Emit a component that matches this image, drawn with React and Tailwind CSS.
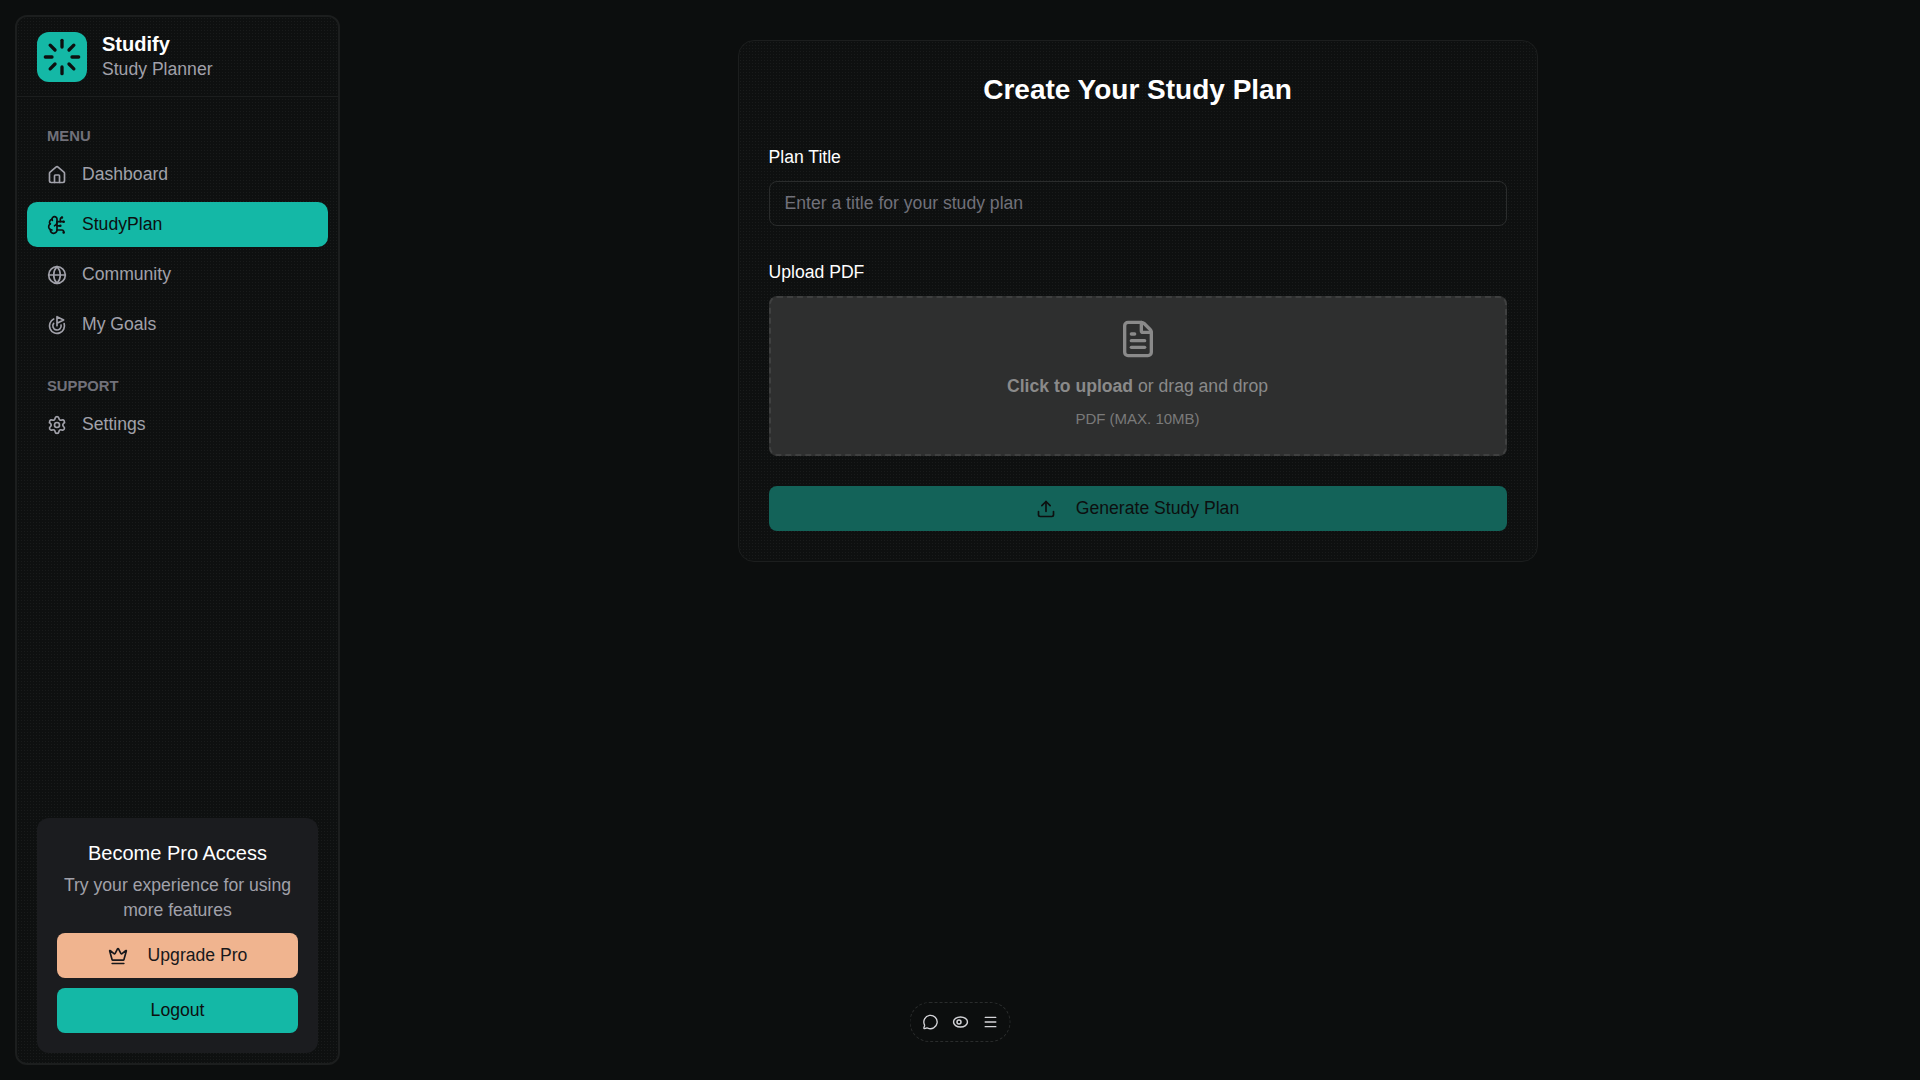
import React from 'react';
import { House, BrainCircuit, Globe, Goal, Settings, Crown, FileText, Upload, MessageCircle, Menu, Loader } from 'lucide-react';

const menuItems = [
  { label: 'Dashboard', icon: House },
  { label: 'StudyPlan', icon: BrainCircuit, active: true },
  { label: 'Community', icon: Globe },
  { label: 'My Goals', icon: Goal },
];

function NavItem({ label, icon: Icon, active }) {
  return (
    <a
      href="#"
      className={`flex h-[45px] items-center gap-[15px] rounded-[10px] px-5 text-[17.6px] ${
        active ? 'bg-[#14b8a6] text-[#0d0f0f]' : 'text-[#a1a1aa]'
      }`}
    >
      <Icon size={20} strokeWidth={2} />
      <span>{label}</span>
    </a>
  );
}

function SectionLabel({ children }) {
  return <div className="h-5 px-5 text-[14.8px] leading-5 font-bold text-[#71717a]">{children}</div>;
}

function Sidebar() {
  return (
    <aside className="m-[15px] flex h-[1050px] w-[325px] shrink-0 flex-col rounded-xl border-2 border-[#1c1e1e] bg-[#0e1010] bg-[radial-gradient(#191b1b_1px,transparent_1px)] bg-[length:3px_3px]">
      <div className="flex items-center gap-[15px] border-b border-[#1c1e1e] px-5 pt-[15px] pb-[14px]">
        <div className="flex h-[50px] w-[50px] items-center justify-center rounded-xl bg-[#14b8a6] text-[#0d0f0f]">
          <Loader size={40} strokeWidth={2} />
        </div>
        <div>
          <div className="text-[20px] leading-[25px] font-bold text-white">Studify</div>
          <div className="text-[17.6px] leading-[25px] text-[#a1a1aa]">Study Planner</div>
        </div>
      </div>

      <nav className="flex flex-col px-[10px] pt-[29px]">
        <SectionLabel>MENU</SectionLabel>
        <div className="mt-[6px] flex flex-col gap-[5px]">
          {menuItems.map((item) => (
            <NavItem key={item.label} {...item} />
          ))}
        </div>
        <div className="mt-[29px]">
          <SectionLabel>SUPPORT</SectionLabel>
        </div>
        <div className="mt-[6px]">
          <NavItem label="Settings" icon={Settings} />
        </div>
      </nav>

      <div className="mx-5 mt-auto mb-[10px] rounded-xl bg-[#1b1c1f] p-5 text-center">
        <h3 className="text-[20px] leading-[30px] text-white">Become Pro Access</h3>
        <p className="mt-[5px] text-[17.6px] leading-[25px] text-[#a1a1aa]">Try your experience for using more features</p>
        <button className="mt-[10px] flex h-[45px] w-full items-center justify-center gap-5 rounded-lg bg-[#f0b48f] text-[17.6px] text-[#18181b]">
          <Crown size={20} strokeWidth={2} />
          Upgrade Pro
        </button>
        <button className="mt-[10px] flex h-[45px] w-full items-center justify-center rounded-lg bg-[#14b8a6] text-[17.6px] text-[#0d0f0f]">
          Logout
        </button>
      </div>
    </aside>
  );
}

function PlanForm() {
  return (
    <div className="mx-auto mt-10 w-[800px] rounded-2xl border border-[#1c1e1e] bg-[#0e1010] bg-[radial-gradient(#191b1b_1px,transparent_1px)] bg-[length:3px_3px] p-[30px]">
      <h1 className="mb-9 text-center text-[28px] leading-[38px] font-bold text-white">Create Your Study Plan</h1>

      <label className="mb-3 block text-[17.6px] leading-6 text-white">Plan Title</label>
      <input
        type="text"
        placeholder="Enter a title for your study plan"
        className="h-[45px] w-full rounded-lg border border-[#2a2c2c] bg-transparent px-[15px] text-[17.6px] text-white outline-none placeholder:text-[#71717a]"
      />

      <label className="mt-[34px] mb-3 block text-[17.6px] leading-6 text-white">Upload PDF</label>
      <div className="flex h-40 flex-col items-center rounded-lg border-2 border-dashed border-[#3f4040] bg-[#2e2f2f] pt-[21px]">
        <FileText size={40} strokeWidth={2} className="text-[#8a8a8a]" />
        <p className="mt-[15px] text-[17.6px] leading-6 text-[#8a8a8a]">
          <span className="font-bold">Click to upload</span> or drag and drop
        </p>
        <p className="mt-[9px] text-[15px] leading-6 text-[#7a7a7a]">PDF (MAX. 10MB)</p>
      </div>

      <button className="mt-[30px] flex h-[45px] w-full items-center justify-center gap-5 rounded-lg bg-[#136359] text-[17.6px] text-[#0d0f0f]">
        <Upload size={20} strokeWidth={2} />
        Generate Study Plan
      </button>
    </div>
  );
}

export default function App() {
  return (
    <div className="flex h-screen overflow-hidden bg-[#0c0e0e] [font-family:'Liberation_Sans',sans-serif]">
      <Sidebar />
      <main className="flex-1">
        <PlanForm />
      </main>

      <div className="fixed bottom-[38px] left-1/2 flex h-[40px] w-[101px] -translate-x-1/2 items-center justify-center gap-[14px] rounded-full border border-dashed border-[#2a2c2c] text-[#d4d4d8]">
        <MessageCircle size={16} strokeWidth={2} />
        <svg width="16" height="16" viewBox="0 0 16 16" fill="none" stroke="currentColor" strokeWidth="1.5">
          <ellipse cx="8" cy="8" rx="7" ry="5" />
          <circle cx="6.5" cy="8" r="2" />
        </svg>
        <Menu size={16} strokeWidth={2} />
      </div>
    </div>
  );
}
